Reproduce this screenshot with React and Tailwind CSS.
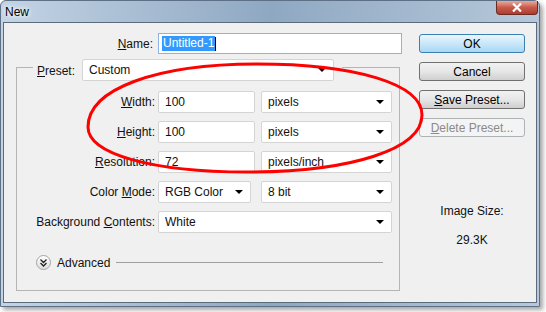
import React from "react";

const Arrow = () => (
  <span className="w-0 h-0 border-l-[4px] border-r-[4px] border-t-[4px] border-l-transparent border-r-transparent border-t-black" />
);

const Select = ({ className, children }) => (
  <div
    className={`${className} h-[22px] bg-white border border-[#d4d4d4] rounded-[2px] flex items-center justify-between pl-[6px] pr-[7px]`}
  >
    <span>{children}</span>
    <Arrow />
  </div>
);

const Input = ({ className, children }) => (
  <div
    className={`${className} h-[22px] bg-white border border-[#d4d4d4] rounded-[2px] flex items-center pl-[6px]`}
  >
    {children}
  </div>
);

const Label = ({ children }) => (
  <div className="w-[141px] text-right pr-[3px]">{children}</div>
);

const Button = ({ variant, children }) => {
  const styles = {
    default:
      "border-[#3c7fb1] bg-gradient-to-b from-[#eaf6fd] via-[#c9e7f9] to-[#a7d9f5] text-black",
    normal:
      "border-[#707070] bg-gradient-to-b from-[#f2f2f2] via-[#e6e6e6] to-[#cfcfcf] text-black",
    disabled: "border-[#adb2b5] bg-[#f4f4f4] text-[#8a8a8a]",
  };
  return (
    <div
      className={`h-[19px] rounded-[3px] border flex items-center justify-center ${styles[variant]}`}
    >
      {children}
    </div>
  );
};

export default function App() {
  return (
    <div className="relative w-[546px] h-[312px] bg-white overflow-hidden font-['Liberation_Sans',Arial,sans-serif] text-[12px] text-[#111]">
      {/* window */}
      <div className="w-[540px] h-[307px] rounded-t-[6px] border border-[#5d7086] bg-gradient-to-r from-[#c3d4e5] via-[#8fa8c2] to-[#b6c8da] shadow-[3px_3px_4px_rgba(60,60,60,0.45)] flex flex-col">
        {/* title bar */}
        <div className="h-[21px] flex justify-between">
          <div className="pl-[4px] pt-[2px] text-[12px] text-black [text-shadow:0_0_6px_#fff,0_0_4px_#fff]">
            New
          </div>
          <div className="w-[42px] h-[14px] mr-[1px] rounded-b-[4px] border border-t-0 border-[#6b2a22] bg-gradient-to-b from-[#e9a99c] via-[#c75a4c] to-[#b03c2e] flex items-center justify-center">
            <svg width="10" height="9" viewBox="0 0 10 9">
              <path d="M1 0.5 L9 8.5 M9 0.5 L1 8.5" stroke="white" strokeWidth="2.2" />
            </svg>
          </div>
        </div>

        {/* client area */}
        <div className="flex-1 mx-[2px] mb-[3px] border border-[#5b6b7c] bg-[#f0f0f0] flex">
          {/* left column */}
          <div className="w-[398px] pt-[10px]">
            <div className="flex h-[21px] items-center">
              <div className="w-[151px] text-right pr-[2px]">
                <u>N</u>ame:
              </div>
              <div className="ml-[3px] w-[244px] h-[21px] bg-white border border-[#8db2e3] flex items-center pl-[3px]">
                <span className="bg-[#3399ff] text-white px-[1px] leading-[15px]">Untitled-1</span>
                <span className="w-px h-[14px] bg-black" />
              </div>
            </div>

            {/* preset group */}
            <div className="ml-[12px] mt-[5px] w-[384px]">
              <div className="flex h-[23px]">
                <div className="w-[17px] mt-[8px] border-t border-l border-[#b5b5b5]" />
                <div className="w-[49px] pl-[4px] flex items-center">
                  <span>
                    <u>P</u>reset:
                  </span>
                </div>
                <Select className="w-[252px]">Custom</Select>
                <div className="w-[8px]" />
                <div className="flex-1 mt-[8px] border-t border-r border-[#b5b5b5]" />
              </div>
              <div className="h-[209px] border-l border-r border-b border-[#b5b5b5] pt-[9px] flex flex-col">
                <div className="flex flex-col gap-[8px]">
                  <div className="flex items-center h-[22px]">
                    <Label>
                      <u>W</u>idth:
                    </Label>
                    <Input className="w-[97px]">100</Input>
                    <Select className="ml-[6px] w-[131px]">pixels</Select>
                  </div>
                  <div className="flex items-center h-[22px]">
                    <Label>
                      <u>H</u>eight:
                    </Label>
                    <Input className="w-[97px]">100</Input>
                    <Select className="ml-[6px] w-[131px]">pixels</Select>
                  </div>
                  <div className="flex items-center h-[22px]">
                    <Label>
                      <u>R</u>esolution:
                    </Label>
                    <Input className="w-[97px]">72</Input>
                    <Select className="ml-[6px] w-[131px]">pixels/inch</Select>
                  </div>
                  <div className="flex items-center h-[22px]">
                    <Label>
                      Color <u>M</u>ode:
                    </Label>
                    <Select className="w-[93px]">RGB Color</Select>
                    <Select className="ml-[10px] w-[131px]">8 bit</Select>
                  </div>
                  <div className="flex items-center h-[22px]">
                    <Label>
                      Background <u>C</u>ontents:
                    </Label>
                    <Select className="w-[234px]">White</Select>
                  </div>
                </div>

                <div className="mt-[22px] flex items-center h-[15px] pl-[19px] pr-[16px]">
                  <div className="w-[15px] h-[15px] rounded-full border border-[#a5a5a5] bg-gradient-to-b from-white to-[#dedede] flex items-center justify-center">
                    <svg width="7" height="8" viewBox="0 0 7 8">
                      <path d="M0.5 0.5 L3.5 3.5 L6.5 0.5 M0.5 4 L3.5 7 L6.5 4" stroke="#222" strokeWidth="1.3" fill="none" />
                    </svg>
                  </div>
                  <span className="ml-[6px]">Advanced</span>
                  <div className="flex-1 h-px bg-[#a0a0a0] ml-[6px]" />
                </div>
              </div>
            </div>
          </div>

          {/* right column */}
          <div className="ml-[17px] w-[106px] pt-[11px] flex flex-col">
            <div className="flex flex-col gap-[9px]">
              <Button variant="default">OK</Button>
              <Button variant="normal">Cancel</Button>
              <Button variant="normal">
                <span>
                  <u>S</u>ave Preset...
                </span>
              </Button>
              <Button variant="disabled">
                <span>
                  <u>D</u>elete Preset...
                </span>
              </Button>
            </div>
            <div className="mt-[67px] text-center leading-[14px]">Image Size:</div>
            <div className="mt-[15px] text-center leading-[14px]">29.3K</div>
          </div>
        </div>
      </div>

      {/* red annotation ellipse */}
      <svg className="absolute left-0 top-0 pointer-events-none" width="546" height="312">
        <path
          d="M88 127 C88 89 156 64 257 64 C356 64 422 84 422 115 C422 149 352 172 247 172 C152 172 88 154 88 127 Z"
          fill="none"
          stroke="#ff0000"
          strokeWidth="3"
        />
      </svg>
    </div>
  );
}
